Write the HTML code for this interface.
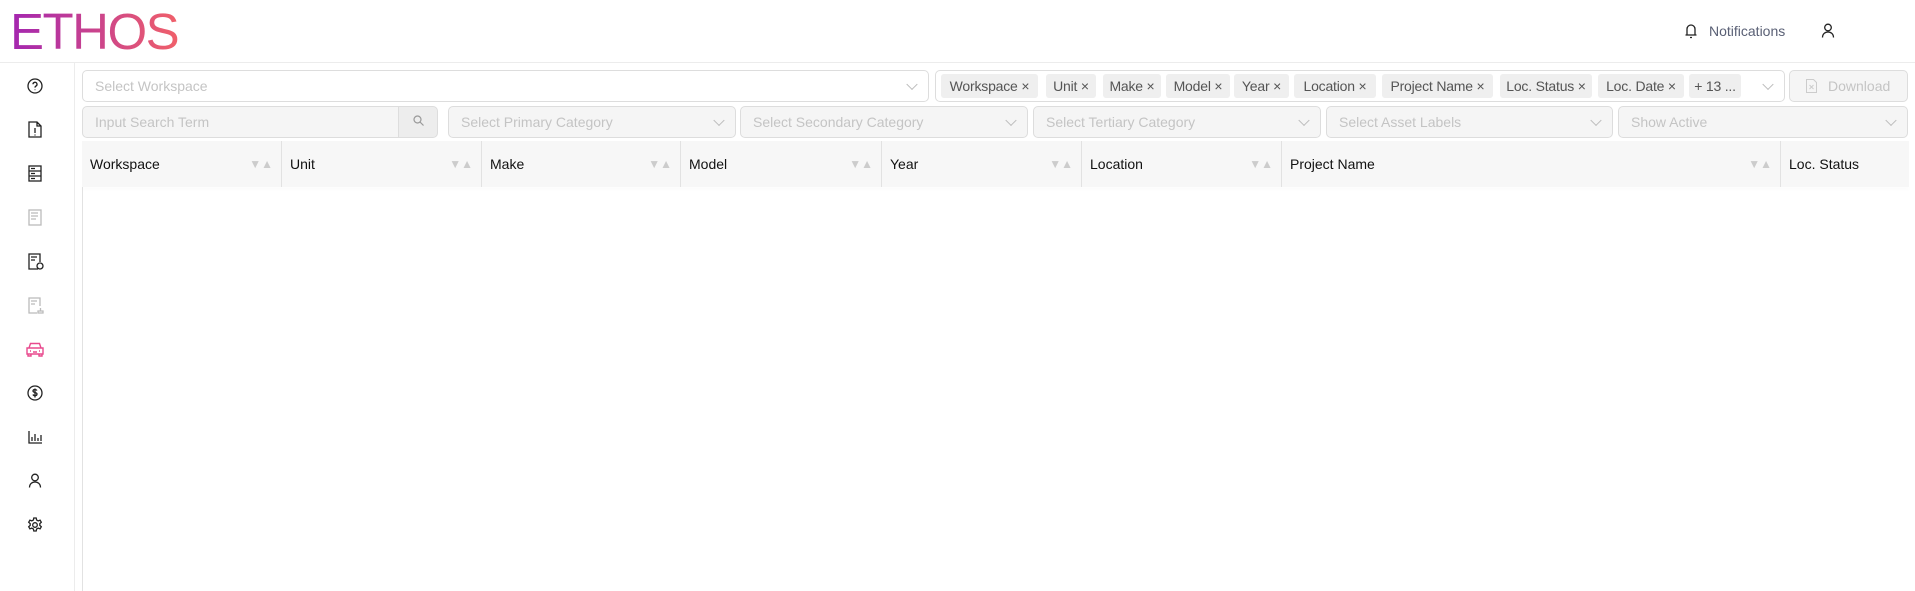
<!DOCTYPE html>
<html><head><meta charset="utf-8"><style>
*{box-sizing:border-box;margin:0;padding:0}
body{width:1915px;height:591px;background:#fff;font-family:"Liberation Sans",sans-serif;position:relative;overflow:hidden;color:#222}
.abs{position:absolute}
.logo{left:10px;top:7px;font-size:51px;font-weight:400;letter-spacing:-1.5px;background:linear-gradient(90deg,#a326b0,#f0606a);-webkit-background-clip:text;color:transparent;line-height:50px}
.hline{left:0;top:62px;width:1915px;height:1px;background:#ececec}
.vline{left:74px;top:62px;width:1px;height:529px;background:#ececec}
.box{position:absolute;border:1px solid #ddd;border-radius:5px;background:#fff;font-size:14px;color:#c4c4c4;padding-left:12px;display:flex;align-items:center}
.dis{background:#f5f5f5}
.chev{position:absolute;right:12px;top:50%;width:8px;height:8px;border-right:1px solid #bbb;border-bottom:1px solid #bbb;transform:translateY(-70%) rotate(45deg)}
.tag{position:absolute;top:74px;height:24px;background:#efefef;border-radius:3px;font-size:14px;color:#555;display:flex;align-items:center;justify-content:center;white-space:nowrap;overflow:hidden;letter-spacing:-0.2px}
.th{position:absolute;top:141px;height:46px;background:#f7f7f7;border-right:1px solid #e2e2e2;font-size:14px;color:#111;display:flex;align-items:center;padding-left:8px}
.sort{position:absolute;right:8px;top:16px;font-size:12px;color:#ccc;letter-spacing:0}
svg{position:absolute}
</style></head><body>
<div class="abs logo">ETHOS</div>
<svg style="left:1684px;top:23px" width="14" height="16" viewBox="0 0 14 16" fill="none" stroke="#222" stroke-width="1.3"><path d="M3 12V6a4 4 0 018 0v6M1.5 12h11M6 14.5h2"/></svg>
<div class="abs" style="left:1709px;top:23px;font-size:14px;color:#5a6075">Notifications</div>
<svg style="left:1821px;top:23px" width="14" height="15" viewBox="0 0 14 15" fill="none" stroke="#222" stroke-width="1.3"><circle cx="7" cy="4.5" r="3.3"/><path d="M1.5 14.5c0-3.5 2.5-5.5 5.5-5.5s5.5 2 5.5 5.5"/></svg>
<div class="abs hline"></div><div class="abs vline"></div>
<svg style="left:27px;top:78px" width="16" height="16" viewBox="0 0 16 16" fill="none" stroke="#222" stroke-width="1.3"><circle cx="8" cy="8" r="7"/><path d="M6 6.3a2 2 0 113 1.7c-.7.4-1 .8-1 1.6M8 11.5v.6"/></svg>
<svg style="left:28px;top:121px" width="14" height="17" viewBox="0 0 14 17" fill="none" stroke="#222" stroke-width="1.3"><path d="M1 1h8l4 4v11H1z M9 1v4h4 M7 7v5M7 13.5v1"/></svg>
<svg style="left:28px;top:165px" width="14" height="17" viewBox="0 0 14 17" fill="none" stroke="#222" stroke-width="1.3"><rect x="1" y="1" width="12" height="15"/><path d="M1 6h12M1 11h12M3 3.5h4M3 8.5h4M3 13.5h4"/></svg>
<svg style="left:28px;top:209px" width="14" height="17" viewBox="0 0 14 17" fill="none" stroke="#bbb" stroke-width="1.3"><rect x="1" y="1" width="12" height="15"/><path d="M3 4h7M3 7h7M3 10h5"/></svg>
<svg style="left:28px;top:253px" width="16" height="17" viewBox="0 0 16 17" fill="none" stroke="#222" stroke-width="1.3"><path d="M10 16H1V1h11v8M3 4h6M3 7h4"/><circle cx="12" cy="13" r="3"/></svg>
<svg style="left:28px;top:297px" width="16" height="17" viewBox="0 0 16 17" fill="none" stroke="#bbb" stroke-width="1.3"><path d="M9 16H1V1h11v8M3 4h6M3 7h4M10 16h5v-2h-5zM12.5 14v-3"/></svg>
<svg style="left:26px;top:342px" width="18" height="15" viewBox="0 0 18 15" fill="none" stroke="#e84a8e" stroke-width="1.4"><path d="M3 6l1.5-4.5h9L15 6M1 6h16v6H1zM2 12v2h3v-2M13 12v2h3v-2M4 9h1M13 9h1M7 10h4"/></svg>
<svg style="left:27px;top:385px" width="16" height="16" viewBox="0 0 16 16" fill="none" stroke="#222" stroke-width="1.3"><circle cx="8" cy="8" r="7"/><path d="M10 5.5c-.5-.7-1.2-1-2-1-1.2 0-2 .6-2 1.5 0 2 4 1 4 3 0 1-.8 1.6-2 1.6-1 0-1.7-.4-2.1-1.1M8 3.5v9"/></svg>
<svg style="left:28px;top:430px" width="15" height="14" viewBox="0 0 15 14" fill="none" stroke="#222" stroke-width="1.3"><path d="M1 1v12h13M4 11V7M7 11V4M10 11V8M13 11V5"/></svg>
<svg style="left:28px;top:473px" width="14" height="15" viewBox="0 0 14 15" fill="none" stroke="#222" stroke-width="1.3"><circle cx="7" cy="4.5" r="3.3"/><path d="M1.5 14.5c0-3.5 2.5-5.5 5.5-5.5s5.5 2 5.5 5.5"/></svg>
<svg style="left:27px;top:517px" width="16" height="16" viewBox="0 0 16 16" fill="none" stroke="#222" stroke-width="1.3"><circle cx="8" cy="8" r="2.3"/><path d="M6.8 1h2.4l.4 2 1.6.9 1.9-.7 1.2 2-1.5 1.4v1.8l1.5 1.4-1.2 2-1.9-.7-1.6.9-.4 2H6.8l-.4-2-1.6-.9-1.9.7-1.2-2 1.5-1.4V6.6L1.7 5.2l1.2-2 1.9.7 1.6-.9z"/></svg>
<div class="box" style="left:82px;top:70px;width:847px;height:32px">Select Workspace<span class="chev"></span></div>
<div class="box" style="left:935px;top:70px;width:850px;height:32px"><span class="chev"></span></div>
<div class="tag" style="left:941px;width:97px">Workspace ×</div>
<div class="tag" style="left:1046px;width:50px">Unit ×</div>
<div class="tag" style="left:1103px;width:58px">Make ×</div>
<div class="tag" style="left:1166px;width:64px">Model ×</div>
<div class="tag" style="left:1234px;width:55px">Year ×</div>
<div class="tag" style="left:1294px;width:82px">Location ×</div>
<div class="tag" style="left:1382px;width:111px">Project Name ×</div>
<div class="tag" style="left:1500px;width:92px">Loc. Status ×</div>
<div class="tag" style="left:1598px;width:86px">Loc. Date ×</div>
<div class="tag" style="left:1689px;width:52px">+ 13 ...</div>
<div class="box dis" style="left:1789px;top:70px;width:119px;height:32px;padding-left:38px">Download</div>
<svg style="left:1806px;top:79px" width="11" height="14" viewBox="0 0 11 14" fill="none" stroke="#ccc" stroke-width="1"><path d="M.5.5h7l3 3v10H.5zM3.5 6l4 4M7.5 6l-4 4"/></svg>
<div class="box dis" style="left:82px;top:106px;width:317px;height:32px;border-radius:5px 0 0 5px">Input Search Term</div>
<div class="box dis" style="left:398px;top:106px;width:40px;height:32px;border-radius:0 5px 5px 0;background:#ededed"></div>
<svg style="left:413px;top:115px" width="11" height="11" viewBox="0 0 11 11" fill="none" stroke="#999" stroke-width="1.2"><circle cx="4.5" cy="4.5" r="3.5"/><path d="M7 7l3.5 3.5"/></svg>
<div class="box dis" style="left:448px;top:106px;width:288px;height:32px">Select Primary Category<span class="chev"></span></div>
<div class="box dis" style="left:740px;top:106px;width:288px;height:32px">Select Secondary Category<span class="chev"></span></div>
<div class="box dis" style="left:1033px;top:106px;width:288px;height:32px">Select Tertiary Category<span class="chev"></span></div>
<div class="box dis" style="left:1326px;top:106px;width:287px;height:32px">Select Asset Labels<span class="chev"></span></div>
<div class="box dis" style="left:1618px;top:106px;width:290px;height:32px">Show Active<span class="chev"></span></div>
<div class="abs" style="left:82px;top:141px;width:1827px;height:450px;border-left:1px solid #e2e2e2"></div>
<div class="abs" style="left:82px;top:186px;width:1827px;height:1px;background:#e2e2e2;box-shadow:0 2px 3px rgba(0,0,0,.05)"></div>
<div class="th" style="left:82px;width:200px">Workspace<span class="sort">▼▲</span></div>
<div class="th" style="left:282px;width:200px">Unit<span class="sort">▼▲</span></div>
<div class="th" style="left:482px;width:199px">Make<span class="sort">▼▲</span></div>
<div class="th" style="left:681px;width:201px">Model<span class="sort">▼▲</span></div>
<div class="th" style="left:882px;width:200px">Year<span class="sort">▼▲</span></div>
<div class="th" style="left:1082px;width:200px">Location<span class="sort">▼▲</span></div>
<div class="th" style="left:1282px;width:499px">Project Name<span class="sort">▼▲</span></div>
<div class="th" style="left:1781px;width:128px;border-right:none">Loc. Status</div>
</body></html>
